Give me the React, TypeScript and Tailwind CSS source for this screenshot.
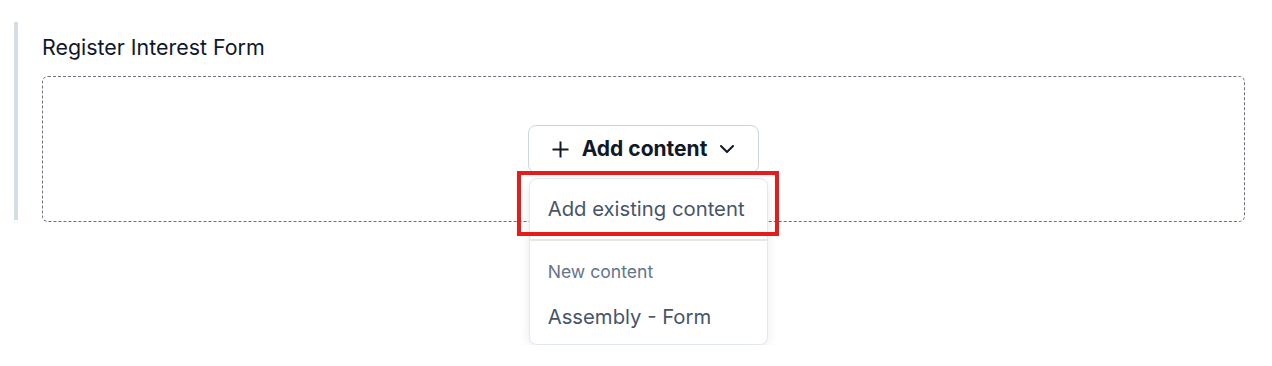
import React from "react";
import { ChevronDown } from "lucide-react";

export default function App() {
  return (
    <div className="h-[345px] overflow-hidden bg-white font-['Inter',sans-serif]">
      <div className="pl-[14px] pt-[22px] pr-[27px]">
        <section className="border-l-4 border-[#d3dde4] pl-[24px] h-[198px]">
          <h2 className="pt-[10px] text-[21.4px] leading-[30px] text-[#0f172a]">
            Register Interest Form
          </h2>
          <div className="mt-[14px] h-[146px] rounded-[6px] border border-dashed border-[#6b7280] flex justify-center pt-[48px]">
            <div className="relative h-[48px]">
              <button className="flex h-[48px] items-center rounded-lg border border-[#cbd5e1] bg-white pl-[23px] pr-[19px] text-[21px] font-bold text-[#111827]">
                <svg width="17" height="17" viewBox="0 0 17 17" className="shrink-0">
                  <path d="M8.5 0.5v16M0.5 8.5h16" stroke="currentColor" strokeWidth="2" fill="none" />
                </svg>
                <span className="ml-[13px]">Add content</span>
                <ChevronDown size={24} strokeWidth={2} className="ml-[8px]" />
              </button>

              <div className="absolute left-[1px] top-[53px] w-[239px] z-10">
                <div className="rounded-lg border border-[#e2e8f0] bg-white shadow-[0_4px_12px_rgba(0,0,0,0.08)]">
                  <div className="flex h-[60px] items-center pl-[18px] text-[20.3px] text-[#475569]">
                    Add existing content
                  </div>
                  <div className="h-[2px] bg-[#e5e7eb]" />
                  <div className="pl-[18px] pt-[21px] pb-[20px] text-[17.6px] leading-[20px] text-[#64748b]">
                    New content
                  </div>
                  <div className="pl-[18px] pb-[12px] text-[20.3px] leading-[30px] text-[#475569]">
                    Assembly - Form
                  </div>
                </div>
                <div className="pointer-events-none absolute -left-[12px] -top-[7px] h-[65px] w-[262px] border-4 border-[#e51c1c]" />
              </div>
            </div>
          </div>
        </section>
      </div>
    </div>
  );
}
